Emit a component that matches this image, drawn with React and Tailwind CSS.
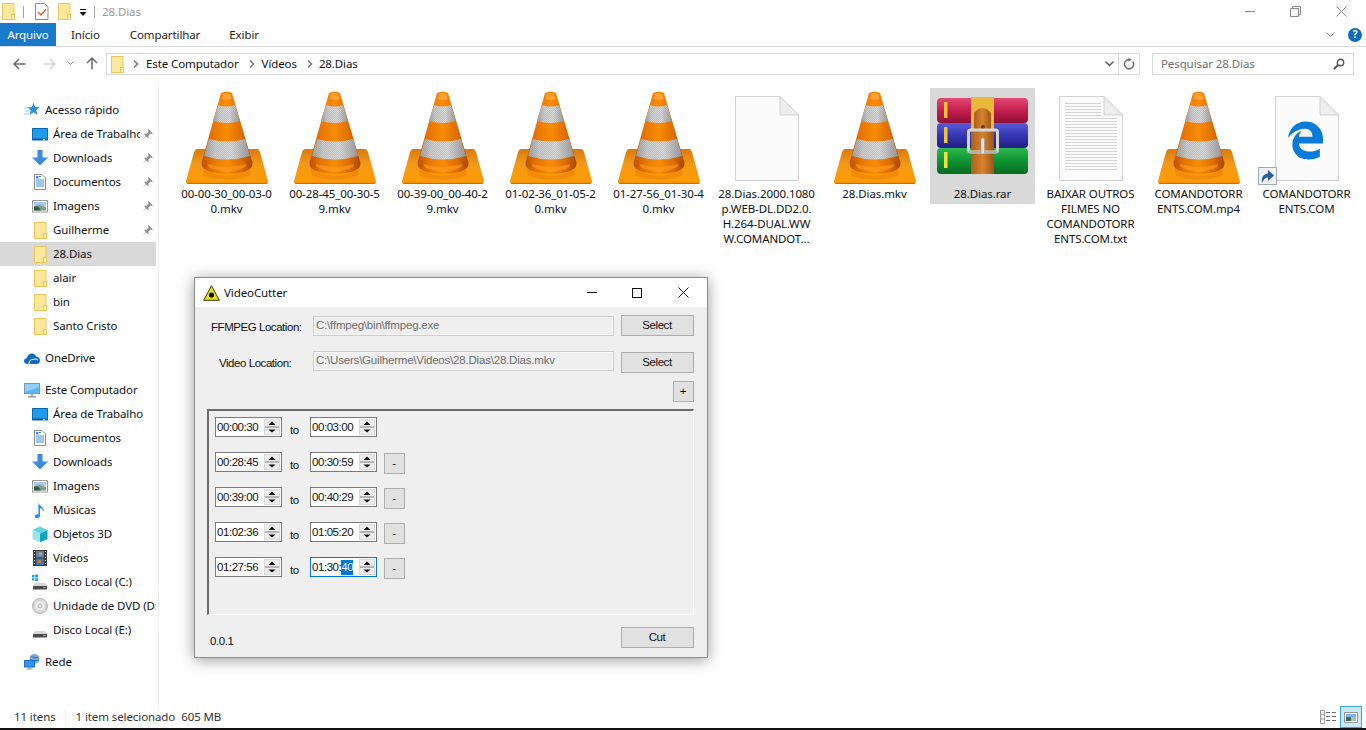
import React from 'react';
import { FaEdgeLegacy } from 'react-icons/fa6';

// ---- small icons ----
const Folder = ({ className = '' }) => (
  <svg width="13" height="17" viewBox="0 0 13 17" className={className}>
    <rect x="0.5" y="0.5" width="11.5" height="16" fill="#FDE89B" stroke="#EBC759" />
    <rect x="9.5" y="11.5" width="3" height="5" fill="#FFF3C4" stroke="#EBC759" />
  </svg>
);

const Pin = () => (
  <svg width="12" height="12" viewBox="0 0 12 12">
    <path d="M6.5 1 L11 5.5 L9.8 6 L8.4 5.6 L6.4 7.8 L6.4 9.6 L5.6 10 L2.2 6.6 L2.6 5.8 L4.4 5.8 L6.6 3.8 L6 2.2 Z" fill="#8f8f8f" />
    <path d="M3.4 8.2 L1 11 L4 8.8 Z" fill="#8f8f8f" />
  </svg>
);

const Star = () => (
  <svg width="16" height="16" viewBox="0 0 16 16">
    <path d="M9.5 0.5 L11.2 5 L15.8 5.3 L12.2 8.2 L13.5 13 L9.5 10.3 L5.5 13 L6.8 8.2 L3.5 5.4 L8 5 Z" fill="#2B8FE0" />
    <path d="M0.5 6 H4 M1.5 9 H5 M0 12 H5" stroke="#8CC4F0" strokeWidth="1" />
  </svg>
);

const DesktopIco = () => (
  <svg width="16" height="13" viewBox="0 0 16 13">
    <rect x="0.5" y="0.5" width="15" height="11.5" fill="#1E9BEB" stroke="#0B6CB5" />
    <rect x="1" y="10.5" width="14" height="1.5" fill="#0B5A9C" />
    <rect x="11" y="11" width="2" height="1" fill="#ffffff" />
  </svg>
);

const DownloadIco = () => (
  <svg width="16" height="16" viewBox="0 0 16 16">
    <path d="M5.5 0 H10.5 V7.5 H16 L8 15.5 L0 7.5 H5.5 Z" fill="#3C8AD8" />
  </svg>
);

const DocIco = () => (
  <svg width="12" height="16" viewBox="0 0 12 16">
    <path d="M0.5 0.5 H8 L11.5 4 V15.5 H0.5 Z" fill="#fff" stroke="#8d8d8d" />
    <path d="M5 2.5 H7 M2 6 H10 M2 8 H10 M2 10 H10 M2 12 H10" stroke="#3C8AD8" />
    <rect x="2" y="2" width="2.5" height="2.5" fill="#3C8AD8" />
  </svg>
);

const PictureIco = () => (
  <svg width="16" height="13" viewBox="0 0 16 13">
    <rect x="0.5" y="0.5" width="15" height="11.5" fill="#fff" stroke="#9a9a9a" />
    <rect x="2" y="2" width="12" height="4" fill="#A9C8EE" />
    <path d="M2 6 L8 5 L14 7 V10.5 H2 Z" fill="#7C9B8C" />
    <path d="M2 7 L6 6.5 L9 10.5 H2 Z" fill="#2F5A45" />
  </svg>
);

const MusicIco = () => (
  <svg width="12" height="17" viewBox="0 0 12 17">
    <path d="M4.5 0.5 C5 4 10.5 5 10 10 C9.5 7.5 7.5 6.5 6 6 V13.5 C6 15.5 3.8 16.5 2.2 16.2 C0.5 15.8 0.3 14 1.5 13 C2.5 12.2 3.6 12.2 4.5 12.5 Z" fill="#1E8FE8" />
  </svg>
);

const CubeIco = () => (
  <svg width="16" height="17" viewBox="0 0 16 17">
    <path d="M8 0.5 L15.5 4 L8 7.5 L0.5 4 Z" fill="#5FD4E4" />
    <path d="M0.5 4 L8 7.5 V16.5 L0.5 13 Z" fill="#9BE4EA" />
    <path d="M15.5 4 L8 7.5 V16.5 L15.5 13 Z" fill="#12A3C4" />
  </svg>
);

const VideoIco = () => (
  <svg width="14" height="16" viewBox="0 0 14 16">
    <rect width="14" height="16" fill="#3a3a3a" />
    <path d="M1 1.5 H2 M1 4.5 H2 M1 7.5 H2 M1 10.5 H2 M1 13.5 H2 M12 1.5 H13 M12 4.5 H13 M12 7.5 H13 M12 10.5 H13 M12 13.5 H13" stroke="#ddd" />
    <rect x="3" y="1" width="8" height="6.5" fill="#5C7FA8" />
    <rect x="3" y="8.5" width="8" height="6.5" fill="#2F78C8" />
    <rect x="6" y="2.5" width="3" height="3" fill="#D8A13A" />
    <rect x="5" y="10" width="3" height="3" fill="#C9802E" />
  </svg>
);

const DiskIco = ({ win }) => (
  <svg width="16" height="16" viewBox="0 0 16 16">
    {win && <path d="M0 1 H2.5 V3.5 H0 Z M3.2 0.5 H6 V3.5 H3.2 Z M0 4.2 H2.5 V6.5 H0 Z M3.2 4.2 H6 V7 H3.2 Z" fill="#17A3EF" />}
    <path d="M2.5 9 H13.5 L15 12 H1 Z" fill="#D8D8D8" />
    <rect x="1" y="12" width="14" height="3.5" fill="#4A4A4A" />
    <rect x="11.5" y="13" width="2" height="1.2" fill="#7FD86A" />
  </svg>
);

const DvdIco = () => (
  <svg width="16" height="16" viewBox="0 0 16 16">
    <circle cx="8" cy="8" r="7.5" fill="#D9D9D9" stroke="#B5B5B5" />
    <circle cx="8" cy="8" r="4.5" fill="#EFEFEF" />
    <circle cx="8" cy="8" r="2" fill="#fff" stroke="#B0B0B0" />
  </svg>
);

const CloudIco = () => (
  <svg width="16" height="11" viewBox="0 0 16 11">
    <path d="M3.5 11 C1 11 0 9.4 0 8 C0 6.4 1.2 5.2 2.8 5.2 C3.4 2.4 5.4 0.5 8 0.5 C10.2 0.5 11.8 1.8 12.4 3.8 C14.6 4 16 5.4 16 7.4 C16 9.6 14.4 11 12.4 11 Z" fill="#0F6CBD" />
    <path d="M5 11 C4.6 8 7 6 9.6 6.4 C11 5.6 13 6 14 7.4" stroke="#fff" strokeWidth="1" fill="none" />
  </svg>
);

const MonitorIco = () => (
  <svg width="16" height="15" viewBox="0 0 16 15">
    <rect x="0.5" y="0.5" width="15" height="10" fill="#5DB7F0" stroke="#7D97AC" />
    <path d="M1 1 H15 V4 L1 9 Z" fill="#8ED0F7" />
    <rect x="6.5" y="11" width="3" height="2" fill="#A9B4BC" />
    <rect x="4" y="13" width="8" height="1.5" fill="#8E9BA6" />
  </svg>
);

const NetworkIco = () => (
  <svg width="16" height="16" viewBox="0 0 16 16">
    <circle cx="10.5" cy="5" r="5" fill="#7FA8D6" />
    <path d="M7 2 C9 4 12 4 14.5 3 M6 6 C9 7 12 7 15 6" stroke="#3E73AE" fill="none" />
    <rect x="0.5" y="6.5" width="10" height="6.5" fill="#2E95E8" stroke="#1A6FB8" />
    <rect x="4" y="13" width="3" height="1.5" fill="#8E9BA6" />
    <rect x="2.5" y="14.5" width="6" height="1" fill="#8E9BA6" />
  </svg>
);

// ---- big file icons ----
const Cone = () => (
  <svg width="82" height="93" viewBox="0 0 82 93">
    <defs>
      <linearGradient id="baseG" x1="0" y1="0" x2="0" y2="1">
        <stop offset="0" stopColor="#D97A10" />
        <stop offset="0.45" stopColor="#F59A18" />
        <stop offset="0.95" stopColor="#FF9A00" />
        <stop offset="1" stopColor="#BF5604" />
      </linearGradient>
      <linearGradient id="bodyG" x1="0" y1="0" x2="1" y2="0">
        <stop offset="0" stopColor="#B85002" />
        <stop offset="0.22" stopColor="#E87504" />
        <stop offset="0.5" stopColor="#FA8C04" />
        <stop offset="0.78" stopColor="#DE6C03" />
        <stop offset="1" stopColor="#A84602" />
      </linearGradient>
      <linearGradient id="bandG" x1="0" y1="0" x2="1" y2="0">
        <stop offset="0" stopColor="#9E9E9E" />
        <stop offset="0.25" stopColor="#CDCDCD" />
        <stop offset="0.6" stopColor="#DADADA" />
        <stop offset="1" stopColor="#989898" />
      </linearGradient>
      <pattern id="dither" width="2" height="2" patternUnits="userSpaceOnUse">
        <rect width="1" height="1" fill="#8c8c8c" />
        <rect x="1" y="1" width="1" height="1" fill="#8c8c8c" />
      </pattern>
    </defs>
    <path d="M11 58 L71 58 Q73 58 74 61 L82 90 Q82 93 80 93 L2 93 Q0 93 0 90 L8 61 Q9 58 11 58 Z" fill="url(#baseG)" />
    <path d="M17 78 Q41 92 65 78 L64 85 Q41 92 18 85 Z" fill="#EE8406" opacity="0.75" />
    <path d="M35 2 Q41 -1 46 2 L66 70 Q70 82 41 83 Q12 82 16 70 Z" fill="url(#bodyG)" />
    <path d="M37 3 Q41 1 44 3 L46 8 Q41 10 36 8 Z" fill="#FFA53A" opacity="0.8" />
    <path d="M32 14 Q41 17 49 14 L54 30 Q41 34 27 30 Z" fill="url(#bandG)" />
    <path d="M32 14 Q41 17 49 14 L54 30 Q41 34 27 30 Z" fill="url(#dither)" opacity="0.3" />
    <path d="M23 48 Q41 53 59 48 L64 65 Q41 72 18 65 Z" fill="url(#bandG)" />
    <path d="M23 48 Q41 53 59 48 L64 65 Q41 72 18 65 Z" fill="url(#dither)" opacity="0.3" />
    <path d="M22 73 Q41 79 60 73 Q62 78 41 81 Q20 78 22 73 Z" fill="#FF9E1E" opacity="0.6" />
  </svg>
);

const BlankDoc = ({ children }) => (
  <svg width="64" height="85" viewBox="0 0 64 85">
    <path d="M0.5 0.5 H45 L63.5 19 V84.5 H0.5 Z" fill="#FBFBFB" stroke="#D2D2D2" />
    <path d="M45 0.5 V19 H63.5 Z" fill="#EDEDED" stroke="#D2D2D2" />
    {children}
  </svg>
);

const TextLines = () => (
  <g stroke="#D4D4D4">
    {[7, 10, 13, 16, 19, 22, 25, 28, 31, 34, 37, 40, 43, 46, 49, 52, 55, 58, 61, 64, 67, 70, 73].map((y, i) => (
      <path key={i} d={y < 20 ? `M6 ${y + 0.5} H42` : `M6 ${y + 0.5} H58`} />
    ))}
  </g>
);

const Rar = () => (
  <svg width="92" height="78" viewBox="0 0 92 78">
    <defs>
      <linearGradient id="redG" x1="0" y1="0" x2="0" y2="1">
        <stop offset="0" stopColor="#E14A72" />
        <stop offset="0.5" stopColor="#C41E4C" />
        <stop offset="1" stopColor="#8E1036" />
      </linearGradient>
      <linearGradient id="blueG" x1="0" y1="0" x2="0" y2="1">
        <stop offset="0" stopColor="#5A5CD8" />
        <stop offset="0.5" stopColor="#3336B4" />
        <stop offset="1" stopColor="#1F2180" />
      </linearGradient>
      <linearGradient id="greenG" x1="0" y1="0" x2="0" y2="1">
        <stop offset="0" stopColor="#2DB84C" />
        <stop offset="0.5" stopColor="#0F9232" />
        <stop offset="1" stopColor="#0A6A24" />
      </linearGradient>
      <linearGradient id="beltG" x1="0" y1="0" x2="1" y2="0">
        <stop offset="0" stopColor="#AD5F1B" />
        <stop offset="0.5" stopColor="#D4842F" />
        <stop offset="1" stopColor="#A05416" />
      </linearGradient>
    </defs>
    <rect x="0" y="1" width="91" height="25" rx="4" fill="url(#redG)" />
    <rect x="0" y="26" width="91" height="25" rx="4" fill="url(#blueG)" />
    <rect x="0" y="51" width="91" height="26" rx="4" fill="url(#greenG)" />
    <rect x="7" y="5" width="3.5" height="16" fill="#F0C23A" />
    <rect x="7" y="30" width="3.5" height="16" fill="#F0C23A" />
    <rect x="7" y="55" width="3.5" height="16" fill="#F0E23A" />
    <rect x="34" y="0" width="23" height="77" rx="1" fill="url(#beltG)" />
    <rect x="34" y="0" width="23" height="33" rx="1" fill="#E8B93A" />
    <path d="M37 33 V16 Q45.5 6 54 16 V33 Z" fill="url(#beltG)" />
    <circle cx="46" cy="30" r="2" fill="#6E3A10" />
    <rect x="31.5" y="33" width="29" height="22" rx="2" fill="none" stroke="#D6D6D6" strokeWidth="3" />
    <path d="M31.5 55 H60.5" stroke="#8f8f8f" />
    <rect x="44" y="41" width="3.5" height="16" rx="1.5" fill="#E4E4E4" stroke="#8a8a8a" strokeWidth="0.5" />
  </svg>
);

const vlcLabel = (a, b) => ({ icon: 'cone', lines: [a, b] });

const files = [
  vlcLabel('00-00-30_00-03-0', '0.mkv'),
  vlcLabel('00-28-45_00-30-5', '9.mkv'),
  vlcLabel('00-39-00_00-40-2', '9.mkv'),
  vlcLabel('01-02-36_01-05-2', '0.mkv'),
  vlcLabel('01-27-56_01-30-4', '0.mkv'),
  { icon: 'blank', lines: ['28.Dias.2000.1080', 'p.WEB-DL.DD2.0.', 'H.264-DUAL.WW', 'W.COMANDOT...'] },
  { icon: 'cone', lines: ['28.Dias.mkv'] },
  { icon: 'rar', lines: ['28.Dias.rar'], selected: true },
  { icon: 'text', lines: ['BAIXAR OUTROS', 'FILMES NO', 'COMANDOTORR', 'ENTS.COM.txt'] },
  { icon: 'cone', lines: ['COMANDOTORR', 'ENTS.COM.mp4'] },
  { icon: 'edge', lines: ['COMANDOTORR', 'ENTS.COM'] },
];

const FileIcon = ({ type }) => {
  if (type === 'cone') return <div className="h-[98px] pt-[3px] flex justify-center"><Cone /></div>;
  if (type === 'blank') return <div className="h-[98px] pt-[8px] flex justify-center"><BlankDoc /></div>;
  if (type === 'text') return <div className="h-[98px] pt-[8px] flex justify-center"><BlankDoc><TextLines /></BlankDoc></div>;
  if (type === 'rar') return <div className="h-[98px] pt-[9px] flex justify-center"><Rar /></div>;
  return (
    <div className="h-[98px] pt-[8px] flex justify-center">
      <div className="relative w-[64px] h-[85px]">
        <BlankDoc />
        <FaEdgeLegacy className="absolute left-[11px] top-[25px] text-[#0A7BD8]" size={39} />
        <div className="absolute -left-[17px] top-[71px] w-[19px] h-[18px] bg-[#EEF2F6] border border-[#9FA9B5] flex items-center justify-center">
          <svg width="15" height="15" viewBox="0 0 15 15">
            <path d="M2 14 C1 8 4 5 8 4.5 V1 L14 6.5 L8 12 V8.5 C5.5 8.5 3.5 10.5 2 14 Z" fill="#2C5E9E" />
          </svg>
        </div>
      </div>
    </div>
  );
};

const NavRow = ({ icon, label, level = 2, pin, selected, clip }) => (
  <div className={`h-6 w-[156px] flex items-center relative ${selected ? 'bg-[#D9D9D9]' : ''}`}>
    <div className={`absolute top-0 h-6 flex items-center justify-center w-4 ${level === 1 ? 'left-6' : 'left-8'}`}>{icon}</div>
    <span className={`whitespace-nowrap overflow-hidden ${level === 1 ? 'ml-[45px]' : 'ml-[53px]'} ${clip ? 'w-[87px]' : ''}`}>{label}</span>
    {pin && <span className="absolute left-[142px] top-[6px]"><Pin /></span>}
  </div>
);

const Sidebar = () => (
  <div className="w-[159px] shrink-0 border-r border-[#F0F0F0] pt-[16px] mt-[2px] -mb-[2px] text-[#111]">
    <NavRow level={1} icon={<Star />} label="Acesso rápido" />
    <NavRow icon={<DesktopIco />} label="Área de Trabalho" pin clip />
    <NavRow icon={<DownloadIco />} label="Downloads" pin />
    <NavRow icon={<DocIco />} label="Documentos" pin />
    <NavRow icon={<PictureIco />} label="Imagens" pin />
    <NavRow icon={<Folder />} label="Guilherme" pin />
    <NavRow icon={<Folder />} label="28.Dias" selected />
    <NavRow icon={<Folder />} label="alair" />
    <NavRow icon={<Folder />} label="bin" />
    <NavRow icon={<Folder />} label="Santo Cristo" />
    <div className="h-2" />
    <NavRow level={1} icon={<CloudIco />} label="OneDrive" />
    <div className="h-2" />
    <NavRow level={1} icon={<MonitorIco />} label="Este Computador" />
    <NavRow icon={<DesktopIco />} label="Área de Trabalho" />
    <NavRow icon={<DocIco />} label="Documentos" />
    <NavRow icon={<DownloadIco />} label="Downloads" />
    <NavRow icon={<PictureIco />} label="Imagens" />
    <NavRow icon={<MusicIco />} label="Músicas" />
    <NavRow icon={<CubeIco />} label="Objetos 3D" />
    <NavRow icon={<VideoIco />} label="Vídeos" />
    <NavRow icon={<DiskIco win />} label="Disco Local (C:)" />
    <NavRow icon={<DvdIco />} label="Unidade de DVD (D:)" />
    <NavRow icon={<DiskIco />} label="Disco Local (E:)" />
    <div className="h-2" />
    <NavRow level={1} icon={<NetworkIco />} label="Rede" />
  </div>
);

const Crumb = () => (
  <svg width="6" height="8" viewBox="0 0 6 8"><path d="M1 0.5 L4.5 4 L1 7.5" stroke="#777" strokeWidth="1.5" fill="none" /></svg>
);

const TopBars = () => (
  <div className="shrink-0">
    {/* title bar */}
    <div className="h-[23px] flex items-center relative">
      <Folder className="ml-[2px]" />
      <div className="ml-[8px] w-px h-[12px] bg-[#A0A0A0]" />
      <svg width="14" height="17" viewBox="0 0 14 17" className="ml-[11px]">
        <path d="M0.5 0.5 H9.5 L13 4 V16.5 H0.5 Z" fill="#fff" stroke="#8d8d8d" />
        <path d="M3 9 L6 12 L11 6.5" stroke="#E2603A" strokeWidth="1.5" fill="none" />
      </svg>
      <Folder className="ml-[9px]" />
      <svg width="8" height="8" viewBox="0 0 8 8" className="ml-[8px] mt-[2px]">
        <path d="M1 0.5 H7" stroke="#111" /><path d="M0.5 3 H7.5 L4 7 Z" fill="#111" />
      </svg>
      <div className="ml-[7px] w-px h-[12px] bg-[#A0A0A0]" />
      <span className="ml-[7px] text-[#9A9A9A]">28.Dias</span>
      <div className="ml-auto flex items-center">
        <div className="w-[10px] h-px bg-[#8a8a8a] mr-[35px]" />
        <svg width="11" height="11" viewBox="0 0 11 11" className="mr-[35px]">
          <path d="M0.5 2.5 H8.5 V10.5 H0.5 Z M2.5 2.5 V0.5 H10.5 V8.5 H8.5" stroke="#8a8a8a" fill="none" />
        </svg>
        <svg width="11" height="11" viewBox="0 0 11 11" className="mr-[19px]">
          <path d="M0.5 0.5 L10.5 10.5 M10.5 0.5 L0.5 10.5" stroke="#8a8a8a" />
        </svg>
      </div>
    </div>
    {/* ribbon tabs */}
    <div className="h-[24px] border-b border-[#DADBDC] flex items-start">
      <div className="w-[56px] h-[23px] bg-[#1979CA] text-white flex items-center justify-center">Arquivo</div>
      <div className="ml-[15px] h-[23px] flex items-center text-[#222]">Início</div>
      <div className="ml-[30px] h-[23px] flex items-center text-[#222]">Compartilhar</div>
      <div className="ml-[29px] h-[23px] flex items-center text-[#222]">Exibir</div>
      <div className="ml-auto h-[23px] flex items-center pr-[4px]">
        <svg width="9" height="6" viewBox="0 0 9 6" className="mr-[13px]"><path d="M0.5 0.5 L4.5 4.5 L8.5 0.5" stroke="#8a8a8a" fill="none" /></svg>
        <div className="w-[14px] h-[14px] rounded-full bg-[#0F6CBD] text-white text-[10px] font-bold flex items-center justify-center">?</div>
      </div>
    </div>
    {/* address row */}
    <div className="h-[33px] pt-[6px] flex items-start">
      <div className="h-[21px] w-[106px] shrink-0 flex items-center">
        <svg width="13" height="12" viewBox="0 0 13 12" className="ml-[13px]"><path d="M12.5 6 H1.5 M6 1 L1 6 L6 11" stroke="#6b6b6b" strokeWidth="1.5" fill="none" /></svg>
        <svg width="13" height="12" viewBox="0 0 13 12" className="ml-[17px]"><path d="M0.5 6 H11.5 M7 1 L12 6 L7 11" stroke="#D4D4D4" strokeWidth="1.5" fill="none" /></svg>
        <svg width="7" height="5" viewBox="0 0 7 5" className="ml-[11px]"><path d="M0.5 0.5 L3.5 3.5 L6.5 0.5" stroke="#8a8a8a" fill="none" /></svg>
        <svg width="12" height="13" viewBox="0 0 12 13" className="ml-[12px]"><path d="M6 12.5 V1.5 M1 6 L6 1 L11 6" stroke="#6b6b6b" strokeWidth="1.5" fill="none" /></svg>
      </div>
      <div className="h-[22px] w-[1034px] border border-[#D9D9D9] flex items-center text-[#111]">
        <Folder className="ml-[4px]" />
        <span className="ml-[9px]"><Crumb /></span>
        <span className="ml-[7px]">Este Computador</span>
        <span className="ml-[10px]"><Crumb /></span>
        <span className="ml-[7px]">Vídeos</span>
        <span className="ml-[10px]"><Crumb /></span>
        <span className="ml-[6px]">28.Dias</span>
        <div className="ml-auto h-full flex items-center">
          <svg width="9" height="6" viewBox="0 0 9 6" className="mr-[4px]"><path d="M0.5 0.5 L4.5 4.5 L8.5 0.5" stroke="#555" strokeWidth="1.4" fill="none" /></svg>
          <div className="w-px h-full bg-[#D9D9D9]" />
          <svg width="12" height="12" viewBox="0 0 12 12" className="mx-[4px]">
            <path d="M9.8 3.5 A4.6 4.6 0 1 1 6 1.6" stroke="#6b6b6b" strokeWidth="1.5" fill="none" /><path d="M5.5 0 L9 1.8 L5.5 3.8 Z" fill="#6b6b6b" />
          </svg>
        </div>
      </div>
      <div className="ml-[12px] h-[22px] w-[202px] border border-[#D9D9D9] flex items-center pl-[8px] text-[#6D6D6D]">
        Pesquisar 28.Dias
        <svg width="12" height="12" viewBox="0 0 12 12" className="ml-auto mr-[8px]">
          <circle cx="7.5" cy="4.5" r="3.2" stroke="#555" strokeWidth="1.4" fill="none" /><path d="M5 7 L1 11" stroke="#555" strokeWidth="2" />
        </svg>
      </div>
    </div>
  </div>
);

const Files = () => (
  <div className="flex-1 pl-[15px] pt-[8px] flex items-start gap-[3px]">
    {files.map((f, i) => (
      <div key={i} className={`w-[105px] shrink-0 ${f.selected ? 'h-[116px] bg-[#D9D9D9]' : ''}`}>
        <FileIcon type={f.icon} />
        <div className="text-center text-[#111] leading-[15px]">
          {f.lines.map((l, j) => <div key={j} className="whitespace-nowrap">{l}</div>)}
        </div>
      </div>
    ))}
  </div>
);

const StatusBar = () => (
  <div className="shrink-0">
    <div className="h-[22px] flex items-center text-[#333]">
      <span className="ml-[14px]">11 itens</span>
      <div className="ml-[9px] w-px h-[14px] bg-[#F0F0F0]" />
      <span className="ml-[10px]">1 item selecionado</span>
      <span className="ml-[6px]">605 MB</span>
      <div className="ml-auto flex items-center mr-[4px]">
        <svg width="16" height="14" viewBox="0 0 16 14" className="mr-[4px]">
          <path d="M0.5 0.5 H4.5 V13.5 H0.5 Z M0.5 4.5 H4.5 M0.5 9 H4.5" stroke="#9a9a9a" fill="none" />
          <path d="M6 2.5 H10 M12 2.5 H16 M6 6.5 H10 M12 6.5 H16 M6 10.5 H10 M12 10.5 H16" stroke="#6b6b6b" />
        </svg>
        <div className="w-[22px] h-[22px] bg-[#CCE8FF] border border-[#3AA3E0] flex items-center justify-center">
          <svg width="14" height="11" viewBox="0 0 14 11">
            <rect x="0.5" y="0.5" width="13" height="10" fill="#fff" stroke="#9a9a9a" />
            <rect x="2" y="2" width="10" height="3" fill="#7FB2F0" /><rect x="2" y="5" width="5" height="4" fill="#3F6A55" /><rect x="7" y="5" width="5" height="4" fill="#A9C0B5" />
          </svg>
        </div>
      </div>
    </div>
    <div className="h-[2px] bg-[#111]" />
  </div>
);

// ---- VideoCutter window ----
const WinButton = ({ className = '', children }) => (
  <div className={`shrink-0 bg-[#E1E1E1] border border-[#ADADAD] pt-px pr-px flex items-center justify-center text-[#111] ${className}`}>{children}</div>
);

const Field = ({ children, className = '' }) => (
  <div className={`w-[301px] h-[20px] bg-[#EFEFEF] border border-[#CDCDCD] shadow-[inset_0_0_0_1px_#F7F7F7] flex items-center pl-[2px] text-[#6D6D6D] tracking-[-0.2px] ${className}`}>{children}</div>
);

const Stepper = () => (
  <svg width="16" height="16" viewBox="0 0 16 16" className="shrink-0">
    <rect x="0.5" y="0.5" width="15" height="15" fill="#EDEDED" stroke="#DADADA" />
    <rect x="1" y="7" width="14" height="2" fill="#B5B5B5" />
    <path d="M8 2.5 L11.5 6 H4.5 Z" fill="#111" />
    <path d="M4.5 10.5 H11.5 L8 13.5 Z" fill="#111" />
  </svg>
);

const Spin = ({ value, active }) => {
  const head = active ? value.slice(0, 6) : value;
  return (
    <div className={`w-[67px] h-[20px] bg-white border flex items-center pl-[1px] text-[#111] ${active ? 'border-[#0078D7]' : 'border-[#7A7A7A]'}`}>
      <span className="w-[47px] pt-px whitespace-nowrap flex items-center">
        {head}
        {active && <span className="bg-[#0078D7] text-[#E8F2FB] h-[15px] leading-[15px]">{value.slice(6)}</span>}
      </span>
      <Stepper />
    </div>
  );
};

const ranges = [
  ['00:00:30', '00:03:00'],
  ['00:28:45', '00:30:59'],
  ['00:39:00', '00:40:29'],
  ['01:02:36', '01:05:20'],
  ['01:27:56', '01:30:40'],
];

const CutterWindow = () => (
  <div className="absolute left-[194px] top-[277px] w-[514px] h-[381px] bg-[#EFEFEF] border border-[#8C8C8C] shadow-[0_2px_14px_rgba(0,0,0,0.4)] flex flex-col">
    <div className="h-[29px] shrink-0 bg-white flex items-center">
      <svg width="17" height="16" viewBox="0 0 17 16" className="ml-[8px]">
        <path d="M8.5 0.7 L16.3 15.3 H0.7 Z" fill="#E8E01E" stroke="#3A3A10" />
        <circle cx="8.5" cy="10" r="2.6" fill="#111" />
      </svg>
      <span className="ml-[4px] text-[#111]">VideoCutter</span>
      <div className="ml-auto flex items-center">
        <div className="w-[10px] h-px bg-[#111] mr-[35px]" />
        <div className="w-[10px] h-[10px] border border-[#111] mr-[36px]" />
        <svg width="11" height="11" viewBox="0 0 11 11" className="mr-[18px]"><path d="M0.5 0.5 L10.5 10.5 M10.5 0.5 L0.5 10.5" stroke="#111" /></svg>
      </div>
    </div>

    <div className="flex-1 flex flex-col font-['Liberation_Sans',sans-serif] text-[11.5px] tracking-[-0.45px] text-[#111]">
      <div className="mt-[8px] flex items-start h-[21px]">
        <span className="w-[118px] pl-[16px] pt-[4px] whitespace-nowrap">FFMPEG Location:</span>
        <Field className="mt-[1px]">{'C:\\ffmpeg\\bin\\ffmpeg.exe'}</Field>
        <WinButton className="ml-[7px] w-[73px] h-[21px]">Select</WinButton>
      </div>
      <div className="mt-[15px] flex items-start h-[22px]">
        <span className="w-[118px] pl-[24px] pt-[4px] whitespace-nowrap">Video Location:</span>
        <Field>{'C:\\Users\\Guilherme\\Videos\\28.Dias\\28.Dias.mkv'}</Field>
        <WinButton className="ml-[7px] mt-[1px] w-[73px] h-[21px]">Select</WinButton>
      </div>
      <WinButton className="mt-[8px] ml-[478px] w-[21px] h-[21px]">+</WinButton>

      <div className="mt-[7px] ml-[12px] w-[487px] h-[206px] shrink-0 border-t-2 border-l-2 border-t-[#6B6B6B] border-l-[#6B6B6B] border-r border-b border-r-[#FAFAFA] border-b-[#FAFAFA] pl-[6px] pt-[6px] flex flex-col gap-[15px]">
        {ranges.map((r, i) => (
          <div key={i} className="h-[20px] flex items-start">
            <Spin value={r[0]} />
            <span className="w-[28px] pl-[8px] pt-[6px] leading-[15px]">to</span>
            <Spin value={r[1]} active={i === 4} />
            {i > 0 && <WinButton className="ml-[7px] mt-[1px] w-[21px] h-[21px]">-</WinButton>}
          </div>
        ))}
      </div>

      <div className="mt-[12px] ml-[15px] w-[484px] flex items-start justify-between">
        <span className="pt-[7px] leading-[14px]">0.0.1</span>
        <WinButton className="w-[73px] h-[21px]">Cut</WinButton>
      </div>
    </div>
  </div>
);

export default function App() {
  return (
    <div className="relative w-[1366px] h-[730px] bg-white overflow-hidden flex flex-col font-['Noto_Sans',sans-serif] text-[11.5px] tracking-[-0.1px]">
      <TopBars />
      <div className="flex-1 flex min-h-0">
        <Sidebar />
        <Files />
      </div>
      <StatusBar />
      <CutterWindow />
    </div>
  );
}
